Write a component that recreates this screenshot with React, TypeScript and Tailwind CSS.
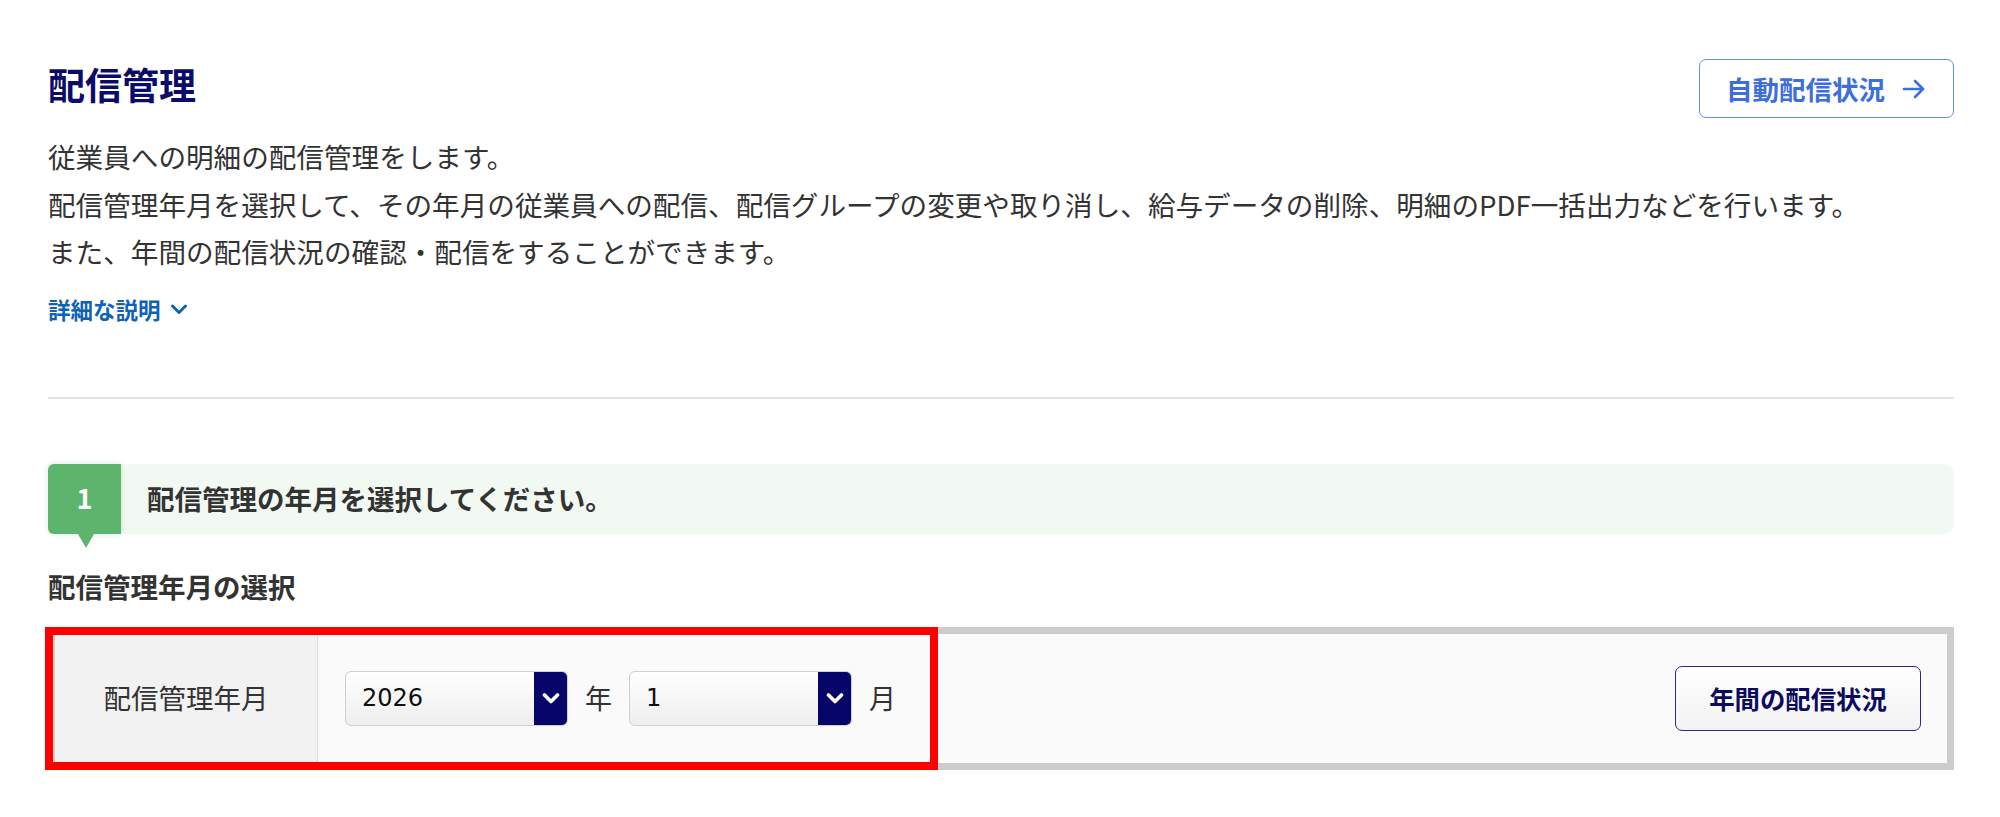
import React from "react";

const ArrowRight = () => (
	<svg width="24" height="20" viewBox="0 0 24 20" fill="none" stroke="currentColor" strokeWidth="2.6" strokeLinecap="round" strokeLinejoin="round">
		<path d="M2 10h19" />
		<path d="M13 2l8 8-8 8" />
	</svg>
);

const ChevronDown = ({ className = "", width = 18, height = 11, stroke = 3 }: { className?: string; width?: number; height?: number; stroke?: number }) => (
	<svg className={className} width={width} height={height} viewBox="0 0 18 11" fill="none" stroke="currentColor" strokeWidth={stroke} strokeLinecap="round" strokeLinejoin="round">
		<path d="M2.5 2l6.5 6.5L15.5 2" />
	</svg>
);

const Select = ({ value }: { value: string }) => (
	<div className="flex w-[223px] h-[55px] rounded-[6px] border border-[#cfcfcf] bg-linear-to-b from-white to-[#eeeeee] overflow-hidden">
		<div className="flex-1 flex items-center pl-[16px] font-['DejaVu_Sans',sans-serif] text-[24px] text-[#111]">
			{value}
		</div>
		<div className="w-[33px] bg-[#05056a] flex items-center justify-center text-white">
			<ChevronDown width={18} height={11} stroke={3.6} />
		</div>
	</div>
);

export default function App() {
	return (
		<div className="min-h-screen bg-white font-['Noto_Sans_CJK_JP',sans-serif] text-[#333]">
			<div className="pl-[48px] pr-[46px] pt-[59px]">
				{/* header */}
				<div className="flex justify-between items-start">
					<h1 className="text-[37px] leading-[50px] font-bold text-[#0b0b6b]">配信管理</h1>
					<button className="flex items-center justify-between w-[255px] h-[59px] pl-[26px] pr-[27px] rounded-[7px] border-[1.5px] border-[#5b8fe0] bg-white text-[#3d6edc] text-[26.5px] font-bold">
						<span>自動配信状況</span>
						<ArrowRight />
					</button>
				</div>

				<p className="mt-[15px] text-[27.6px] leading-[47.5px] text-[#333]">
					従業員への明細の配信管理をします。
					<br />
					配信管理年月を選択して、その年月の従業員への配信、配信グループの変更や取り消し、給与データの削除、明細のPDF一括出力などを行います。
					<br />
					また、年間の配信状況の確認・配信をすることができます。
				</p>

				<div className="mt-[19px] flex items-center gap-[9px] h-[30px] text-[22.5px] font-bold text-[#0f63b6]">
					<span>詳細な説明</span>
					<ChevronDown />
				</div>

				<div className="mt-[72px] h-[2px] bg-[#e4e4e4]" />

				{/* step */}
				<div className="mt-[65px] h-[70px] flex items-center bg-[#f2f9f3] rounded-r-[10px]">
					<div className="relative w-[73px] h-full rounded-l-[6px] bg-[#5db56d] shadow-[0_0_6px_rgba(0,0,0,0.12)] flex items-center justify-center text-white text-[27px] font-bold">
						1
						<div className="absolute top-full left-1/2 -translate-x-1/2 ml-[1px] w-0 h-0 border-l-[8px] border-r-[8px] border-t-[14px] border-l-transparent border-r-transparent border-t-[#5db56d]" />
					</div>
					<div className="ml-[26px] text-[27.5px] font-bold text-[#333]">配信管理の年月を選択してください。</div>
				</div>

				<h2 className="mt-[33px] text-[27.5px] leading-[38px] font-bold text-[#333]">配信管理年月の選択</h2>

				{/* form */}
				<div className="relative mt-[22px]">
					<div className="flex h-[143px] border-[7px] border-[#cccccc] bg-[#fafafa]">
						<div className="w-[263px] bg-[#f2f2f2] border-r border-[#dcdcdc] flex items-center justify-center text-[27.5px] text-[#333]">
							配信管理年月
						</div>
						<div className="flex-1 flex items-center pl-[27px] pr-[26px]">
							<Select value="2026" />
							<span className="mx-[17px] text-[27px] text-[#333]">年</span>
							<Select value="1" />
							<span className="ml-[17px] text-[27px] text-[#333]">月</span>
							<button className="ml-auto w-[246px] h-[65px] rounded-[7px] border-[1.5px] border-[#2a2a7a] bg-linear-to-b from-white to-[#f2f2f2] text-[25.4px] font-bold text-[#0b0b5e]">
								年間の配信状況
							</button>
						</div>
					</div>
					<div className="pointer-events-none absolute left-[-3px] top-0 w-[893px] h-[143px] border-[8px] border-[#ff0000]" />
				</div>
			</div>
		</div>
	);
}
